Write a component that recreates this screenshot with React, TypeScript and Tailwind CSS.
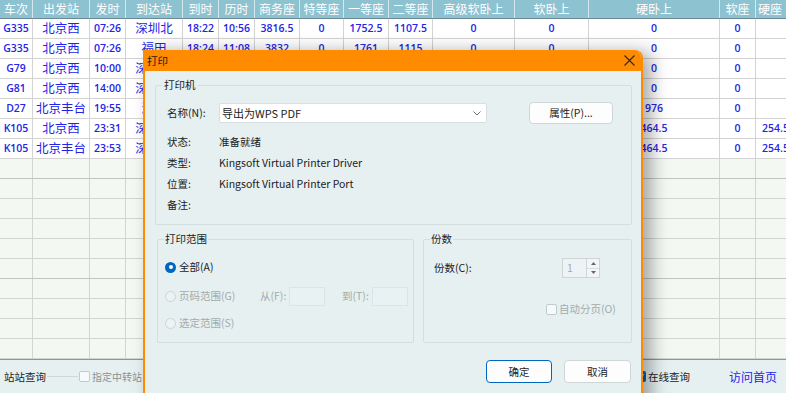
import React from 'react';

const cols = [33, 57, 36, 57, 36, 36, 45, 44, 45, 44, 82, 74, 131, 36, 60];
const heads = ['车次', '出发站', '发时', '到达站', '到时', '历时', '商务座', '特等座', '一等座', '二等座', '高级软卧上', '软卧上', '硬卧上', '软座', '硬座'];
const rows: string[][] = [
  ['G335', '北京西', '07:26', '深圳北', '18:22', '10:56', '3816.5', '0', '1752.5', '1107.5', '0', '0', '0', '0', ''],
  ['G335', '北京西', '07:26', '福田', '18:24', '11:08', '3832', '0', '1761', '1115', '0', '0', '0', '0', ''],
  ['G79', '北京西', '10:00', '深圳北', '18:56', '08:56', '3816.5', '0', '1752.5', '1107.5', '0', '0', '0', '0', ''],
  ['G81', '北京西', '14:00', '深圳北', '23:14', '09:14', '3816.5', '0', '1752.5', '1107.5', '0', '0', '0', '0', ''],
  ['D27', '北京丰台', '19:55', '深圳', '', '', '', '', '', '', '', '', '976', '0', ''],
  ['K105', '北京西', '23:31', '深圳东', '', '', '', '', '', '', '', '', '464.5', '0', '254.5'],
  ['K105', '北京丰台', '23:53', '深圳东', '', '', '', '', '', '', '', '', '464.5', '0', '254.5'],
];
const cjkCols = new Set([1, 3]);

function Radio({ on }: { on?: boolean }) {
  return on ? (
    <div className="w-[11px] h-[11px] shrink-0 rounded-full bg-[#0067c0] flex items-center justify-center">
      <div className="w-[4px] h-[4px] rounded-full bg-white" />
    </div>
  ) : (
    <div className="w-[11px] h-[11px] shrink-0 rounded-full border border-[#cdd4d6] bg-[#edf3f4]" />
  );
}

function Box() {
  return <div className="w-[11px] h-[11px] shrink-0 rounded-[2px] border border-[#c3cacc] bg-[#f7fafa]" />;
}

export default function App() {
  return (
    <div className="relative w-[786px] h-[393px] overflow-hidden bg-white font-['Noto_Sans_CJK_SC',sans-serif]">
      {/* table */}
      <div className="flex flex-col w-[816px]">
        <div className="flex h-[19px] bg-[#8dc2d1] border-b border-[#6d8a94]">
          {heads.map((h, i) => (
            <div
              key={i}
              style={{ width: cols[i] }}
              className={`shrink-0 h-full border-r border-[#d4e8ee] text-white text-[12px] leading-[18px] flex items-center ${i === 14 ? 'justify-start pl-[2px]' : 'justify-center'}`}
            >
              {h}
            </div>
          ))}
        </div>
        {rows.map((r, ri) => (
          <div key={ri} className="flex h-[20px] bg-white border-b border-[#d3d3d3]">
            {r.map((c, i) => (
              <div
                key={i}
                style={{ width: cols[i] }}
                className={`shrink-0 h-full border-r border-[#d3d3d3] text-[#2424e8] flex items-center whitespace-nowrap ${i === 14 ? 'justify-start pl-[6px]' : 'justify-center'} ${cjkCols.has(i) ? "text-[12.5px] font-['Noto_Sans_CJK_SC',sans-serif]" : "text-[10.5px] font-semibold font-['Open_Sans','Noto_Sans_CJK_SC',sans-serif]"}`}
              >
                {c}
              </div>
            ))}
          </div>
        ))}
        {Array.from({ length: 10 }).map((_, ri) => (
          <div key={ri} className={`flex h-[20px] bg-[#f4f8f3] border-b ${ri === 0 || ri === 5 ? 'border-[#c2c6c2]' : 'border-[#d2d6d2]'}`}>
            {cols.map((w, i) => (
              <div key={i} style={{ width: w }} className="shrink-0 h-full border-r border-[#d2d6d2]" />
            ))}
          </div>
        ))}
      </div>

      {/* bottom bar */}
      <div className="flex items-center h-[34px] bg-[#e6f0f1] border-t border-[#8c979b] text-[10.5px]">
        <span className="pl-[4px] text-[#222] whitespace-nowrap">站站查询</span>
        <div className="w-[31px] h-px bg-[#cfd7d9] mx-[1px]" />
        <Box />
        <span className="ml-[2px] text-[#8a9294] text-[10px] whitespace-nowrap">指定中转站</span>
        <div className="ml-auto flex items-center pr-[9px]">
          <div className="w-[11px] h-[11px] shrink-0 rounded-[2px] bg-[#0067c0] flex items-center justify-center">
            <svg width="9" height="9" viewBox="0 0 9 9"><path d="M1.5 4.5 L3.6 6.6 L7.5 2.4" stroke="white" strokeWidth="1.3" fill="none" /></svg>
          </div>
          <span className="ml-[2px] text-[#222] whitespace-nowrap">在线查询</span>
          <span className="ml-[39px] text-[#2424e8] text-[12px] whitespace-nowrap">访问首页</span>
        </div>
      </div>

      {/* dialog */}
      <div className="absolute left-[143px] top-[50px] w-[500px] h-[360px] border-x-2 border-[#ff8c00] rounded-tr-[8px] overflow-hidden bg-[#e6f0f1] shadow-[8px_2px_18px_rgba(0,0,0,0.35)] flex flex-col text-[10.5px] text-[#222]">
        <div className="h-[21px] bg-[#ff8c00] flex items-center justify-between pl-[2px] pr-[6px] shrink-0">
          <span className="text-[#1a1a1a] text-[10.5px]">打印</span>
          <svg width="11" height="11" viewBox="0 0 11 11"><path d="M0.5 0.5 L10.5 10.5 M10.5 0.5 L0.5 10.5" stroke="#2a2a2a" strokeWidth="1.1" /></svg>
        </div>

        {/* printer group */}
        <div className="relative ml-[10px] mt-[14px] w-[477px] h-[140px] border border-[#d2dee0] rounded-[2px] pt-[16px] pl-[11px] shrink-0">
          <span className="absolute -top-[9px] left-[6px] px-[2px] bg-[#e6f0f1] leading-[16px]">打印机</span>
          <div className="flex items-center h-[22px]">
            <span className="w-[52px] shrink-0">名称(N):</span>
            <div className="w-[268px] h-[20px] bg-white border border-[#d9dfe0] rounded-[2px] flex items-center justify-between pl-[2px] pr-[5px] shrink-0">
              <span className="text-[11px]">导出为WPS PDF</span>
              <svg width="8" height="5" viewBox="0 0 8 5"><path d="M0.5 0.5 L4 4 L7.5 0.5" stroke="#777" strokeWidth="1" fill="none" /></svg>
            </div>
            <div className="ml-[42px] w-[84px] h-[22px] bg-[#fdfdfd] border border-[#cfd6d8] rounded-[4px] flex items-center justify-center shrink-0">属性(P)...</div>
          </div>
          <div className="mt-[7px] flex items-center h-[21px]"><span className="w-[52px]">状态:</span><span>准备就绪</span></div>
          <div className="flex items-center h-[21px]"><span className="w-[52px]">类型:</span><span>Kingsoft Virtual Printer Driver</span></div>
          <div className="flex items-center h-[21px]"><span className="w-[52px]">位置:</span><span>Kingsoft Virtual Printer Port</span></div>
          <div className="flex items-center h-[21px]"><span className="w-[52px]">备注:</span></div>
        </div>

        <div className="flex mt-[14px] shrink-0">
          {/* range group */}
          <div className="relative ml-[12px] w-[257px] h-[104px] border border-[#d2dee0] rounded-[2px] pt-[17px] pl-[7px]">
            <span className="absolute -top-[9px] left-[6px] px-[1px] bg-[#e6f0f1] leading-[16px]">打印范围</span>
            <div className="flex items-center h-[20px]">
              <Radio on />
              <span className="ml-[3px]">全部(A)</span>
            </div>
            <div className="flex items-center h-[20px] mt-[9px] text-[#a3abad]">
              <div className="w-[95px] flex items-center shrink-0">
                <Radio />
                <span className="ml-[3px] whitespace-nowrap">页码范围(G)</span>
              </div>
              <span className="w-[29px] shrink-0 whitespace-nowrap">从(F):</span>
              <div className="w-[36px] h-[19px] border border-[#dbe4e6] bg-[#e9f2f3] shrink-0" />
              <span className="ml-[17px] w-[30px] shrink-0 whitespace-nowrap">到(T):</span>
              <div className="w-[36px] h-[19px] border border-[#dbe4e6] bg-[#e9f2f3] shrink-0" />
            </div>
            <div className="flex items-center h-[20px] mt-[7px] text-[#a3abad]">
              <Radio />
              <span className="ml-[3px] whitespace-nowrap">选定范围(S)</span>
            </div>
          </div>

          {/* copies group */}
          <div className="relative ml-[9px] w-[209px] h-[104px] border border-[#d2dee0] rounded-[2px] pt-[18px] pl-[10px] pr-[31px]">
            <span className="absolute -top-[9px] left-[6px] px-[1px] bg-[#e6f0f1] leading-[16px]">份数</span>
            <div className="flex items-center h-[20px]">
              <span className="flex-1">份数(C):</span>
              <div className="flex w-[38px] h-[20px] border border-[#cdd5d7]">
                <div className="flex-1 bg-[#eef4f5] text-[#a3abad] pl-[4px] leading-[18px]">1</div>
                <div className="w-[13px] flex flex-col border-l border-[#cdd5d7] bg-[#f3f6f6]">
                  <div className="flex-1 flex items-center justify-center border-b border-[#d8dfe0]">
                    <svg width="5" height="3" viewBox="0 0 5 3"><path d="M0 3 L2.5 0 L5 3 Z" fill="#666" /></svg>
                  </div>
                  <div className="flex-1 flex items-center justify-center">
                    <svg width="5" height="3" viewBox="0 0 5 3"><path d="M0 0 L2.5 3 L5 0 Z" fill="#666" /></svg>
                  </div>
                </div>
              </div>
            </div>
            <div className="flex items-center h-[20px] mt-[21px] ml-[112px] text-[#a3abad]">
              <Box />
              <span className="ml-[2px] whitespace-nowrap">自动分页(O)</span>
            </div>
          </div>
        </div>

        <div className="flex justify-end gap-[12px] pr-[10px] mt-[17px] shrink-0">
          <div className="w-[66px] h-[23px] bg-[#fdfdfd] border border-[#0067c0] rounded-[4px] flex items-center justify-center">确定</div>
          <div className="w-[67px] h-[23px] bg-[#fdfdfd] border border-[#cfd6d8] rounded-[4px] flex items-center justify-center">取消</div>
        </div>
      </div>
    </div>
  );
}
